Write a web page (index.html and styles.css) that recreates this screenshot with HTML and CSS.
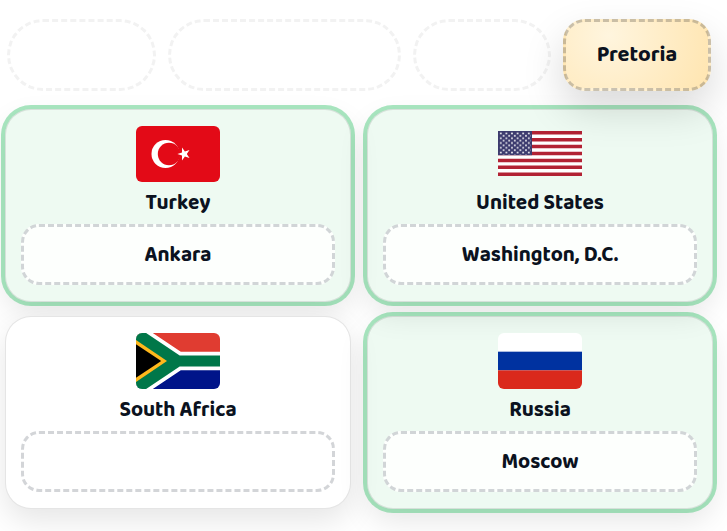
FILE: index.html
```html
<!DOCTYPE html>
<html lang="en">
  <head>
    <meta charset="UTF-8" />
    <meta name="viewport" content="width=device-width, initial-scale=1.0" />
    <title>Match the Capitals</title>
    <link rel="stylesheet" href="styles.css">
  </head>
  <body>
    <!-- capitals left to place -->
    <div class="capitals">
      <button type="button" class="capital used" aria-label="Used" disabled></button>
      <button type="button" class="capital used" aria-label="Used" disabled></button>
      <button type="button" class="capital used" aria-label="Used" disabled></button>
      <button type="button" class="capital">Pretoria</button>
    </div>

    <main class="countries">
      <section class="country correct">
        <div class="flag">
          <svg class="rounded" width="84" height="56" viewBox="0 0 84 56">
            <rect width="84" height="56" fill="#e30a17" />
            <circle cx="29.5" cy="28" r="14" fill="#fff" />
            <circle cx="33" cy="28" r="11.2" fill="#e30a17" />
            <polygon fill="#fff" points="41.4,28 46,26.4 46,21.6 48.9,25.4 53.5,24 50.8,28 53.5,32 48.9,30.5 46,34.4 46,29.6" />
          </svg>
        </div>
        <h2>Turkey</h2>
        <div class="drop">Ankara</div>
      </section>

      <section class="country correct">
        <div class="flag">
          <svg width="84" height="56" viewBox="0 -5 84 56">
            <defs>
              <pattern id="stars" width="5.6" height="4.8" patternUnits="userSpaceOnUse">
                <circle cx="2.8" cy="2.4" r="0.9" fill="#fff" />
                <circle cx="0" cy="0" r="0.9" fill="#fff" />
                <circle cx="5.6" cy="0" r="0.9" fill="#fff" />
                <circle cx="0" cy="4.8" r="0.9" fill="#fff" />
                <circle cx="5.6" cy="4.8" r="0.9" fill="#fff" />
              </pattern>
            </defs>
            <rect width="84" height="45" fill="#fff" />
            <path
              d="M0 1.73H84M0 8.65H84M0 15.58H84M0 22.5H84M0 29.42H84M0 36.35H84M0 43.27H84"
              stroke="#b22234"
              stroke-width="3.46"
            />
            <rect width="34" height="24.2" fill="#3c3b6e" />
            <rect x="1" y="1" width="32" height="22.4" fill="url(#stars)" />
          </svg>
        </div>
        <h2>United States</h2>
        <div class="drop">Washington, D.C.</div>
      </section>

      <section class="country">
        <div class="flag">
          <svg class="rounded" width="84" height="56" viewBox="0 0 84 56">
            <rect width="84" height="28" fill="#e03c31" />
            <rect y="28" width="84" height="28" fill="#001489" />
            <path d="M0 -11.2L16.8 0L44.8 18.7H84V37.3H44.8L16.8 56L0 67.2Z" fill="#fff" />
            <path d="M0 -6.7L10.1 0L43.7 22.4H84V33.6H43.7L10.1 56L0 62.7Z" fill="#007749" />
            <path d="M0 7L31 28L0 49Z" fill="#ffb81c" />
            <path d="M0 11.2L25.2 28L0 44.8Z" fill="#000" />
          </svg>
        </div>
        <h2>South Africa</h2>
        <div class="drop"></div>
      </section>

      <section class="country correct">
        <div class="flag">
          <svg class="rounded" width="84" height="56" viewBox="0 0 84 56">
            <rect width="84" height="56" fill="#fff" />
            <rect y="18.67" width="84" height="18.67" fill="#0032a0" />
            <rect y="37.33" width="84" height="18.67" fill="#da291c" />
          </svg>
        </div>
        <h2>Russia</h2>
        <div class="drop">Moscow</div>
      </section>
    </main>
  </body>
</html>
```

FILE: styles.css
```css
* {
  box-sizing: border-box;
}
body {
  margin: 0;
  padding: 19px 14px 22px 5px;
  background-color: #fff;
  color: #0b1220;
  font-family: "Baloo 2", "Noto Sans", sans-serif;
  font-size: 21px;
  font-weight: 700;
}
.capitals {
  display: grid;
  grid-template-columns: 149fr 233fr 138fr 148fr;
  gap: 12px;
  padding: 0 2px;
  margin-bottom: 18px;
}
.capital {
  position: relative;
  z-index: 1;
  height: 72px;
  padding: 0;
  border: 3px dashed rgba(15, 23, 42, 0.22);
  border-radius: 22px;
  background: radial-gradient(circle at 30% 20%, #fff5de, #ffe5b0);
  box-shadow: 0 18px 40px rgba(0, 0, 0, 0.15);
  color: inherit;
  font: inherit;
  font-size: 22px;
  cursor: grab;
}
.capital.used {
  z-index: 0;
  border-color: #f2f2f2;
  border-radius: 36px;
  background: none;
  box-shadow: none;
  cursor: default;
}
.countries {
  display: grid;
  grid-template-columns: 1fr 1fr;
  gap: 14px 16px;
}
.country {
  padding: 16px 15px;
  border: 1px solid rgba(0, 0, 0, 0.1);
  border-radius: 26px;
  background-color: #fff;
  box-shadow: 0 12px 30px rgba(0, 0, 0, 0.1);
}
.country.correct {
  background-color: rgba(34, 190, 94, 0.08);
  box-shadow: 0 0 0 4px rgba(28, 190, 90, 0.38), 0 12px 30px rgba(0, 0, 0, 0.1);
}
.flag {
  display: flex;
  justify-content: center;
  align-items: center;
  height: 56px;
}
.rounded {
  border-radius: 6px;
}
h2 {
  margin: 8px 0;
  font-size: 21px;
  font-weight: 700;
  line-height: 26px;
  text-align: center;
}
.drop {
  display: flex;
  justify-content: center;
  align-items: center;
  height: 61px;
  border: 3px dashed rgba(15, 23, 42, 0.18);
  border-radius: 18px;
  background-color: rgba(255, 255, 255, 0.85);
}
```
